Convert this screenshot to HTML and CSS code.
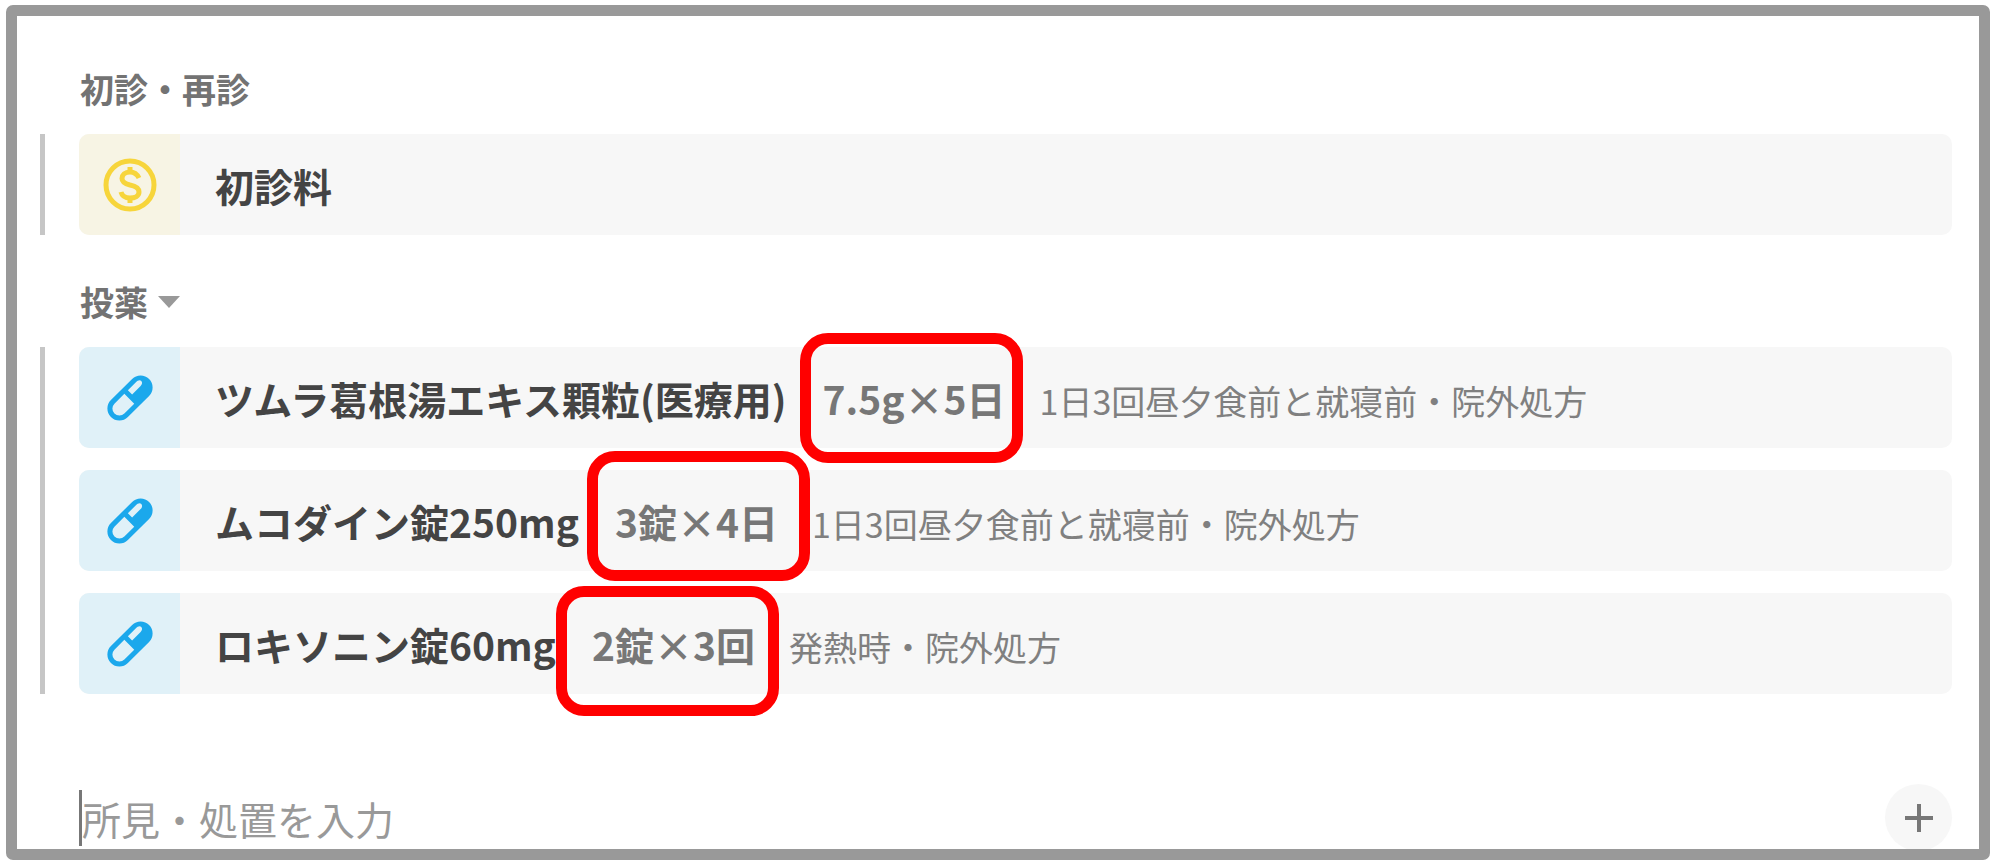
FILE: index.html
```html
<!DOCTYPE html>
<html lang="ja">
<head>
    <meta charset="UTF-8">
    <meta name="viewport" content="width=device-width, initial-scale=1.0">
    <title>カルテ入力</title>
    <link rel="stylesheet" href="styles.css">
</head>
<body>
    <svg width="0" height="0" class="defs" aria-hidden="true">
        <symbol id="pill" viewBox="0 0 48 48">
            <g transform="rotate(45 24 24)">
                <rect x="12" y="-3" width="24" height="54" rx="12" fill="#1ba8ec"/>
                <path d="M17 25h14v14a7 7 0 0 1-14 0z" fill="#e0f1f8"/>
                <path d="M17 20v-11c0-3 1-5 3-5s3 2 3 4v12z" fill="#e0f1f8"/>
            </g>
        </symbol>
    </svg>

    <main class="karte">
        <section class="section">
            <h2 class="section-title">初診・再診</h2>
            <ul class="orders">
                <li class="order">
                    <span class="order-icon fee">
                        <svg viewBox="0 0 54 54" width="54" height="54" fill="none" stroke="#f7d53b" stroke-width="5">
                            <circle cx="27" cy="27" r="24"/>
                            <path d="M36 20c-2-4-5-6-9-6-5 0-8 3-8 6.500 0 4 4 5.500 8 6.500 5 1 9 3 9 7s-4 6-9 6c-5 0-8-2-9-6"/>
                            <path d="M27 9v6M27 39v6"/>
                        </svg>
                    </span>
                    <span class="name">初診料</span>
                </li>
            </ul>
        </section>

        <section class="section">
            <h2 class="section-title">
                <button type="button" class="toggle">投薬<span class="arrow"></span></button>
            </h2>
            <ul class="orders">
                <li class="order">
                    <span class="order-icon drug"><svg width="48" height="48"><use href="#pill"/></svg></span>
                    <p class="order-text">
                        <span class="name">ツムラ葛根湯エキス顆粒(医療用)</span>
                        <span class="amount">7.5g×5日<span class="mark mark-first"></span></span>
                        <span class="usage">1日3回昼夕食前と就寝前・院外処方</span>
                    </p>
                </li>
                <li class="order">
                    <span class="order-icon drug"><svg width="48" height="48"><use href="#pill"/></svg></span>
                    <p class="order-text">
                        <span class="name">ムコダイン錠250mg</span>
                        <span class="amount">3錠×4日<span class="mark mark-second"></span></span>
                        <span class="usage">1日3回昼夕食前と就寝前・院外処方</span>
                    </p>
                </li>
                <li class="order">
                    <span class="order-icon drug"><svg width="48" height="48"><use href="#pill"/></svg></span>
                    <p class="order-text">
                        <span class="name">ロキソニン錠60mg</span>
                        <span class="amount">2錠×3回<span class="mark mark-third"></span></span>
                        <span class="usage">発熱時・院外処方</span>
                    </p>
                </li>
            </ul>
        </section>

        <form class="entry">
            <input type="text" class="entry-input" placeholder="所見・処置を入力" aria-label="所見・処置を入力">
            <button type="button" class="add" aria-label="追加">
                <svg viewBox="0 0 28 28" width="28" height="28" stroke="#777" stroke-width="4">
                    <path d="M0 14h28M14 0v28"/>
                </svg>
            </button>
        </form>
    </main>
</body>
</html>
```
FILE: styles.css
```css
* {
    box-sizing: border-box;
}
body {
    margin: 0;
    padding: 5px 10px 8px 6px;
    background: #fff;
    font-family: "Noto Sans CJK JP", "Noto Sans", sans-serif;
    color: #444;
}
button, input {
    font: inherit;
    color: inherit;
    border: none;
    padding: 0;
    background: none;
}
.defs {
    position: absolute;
}
.karte {
    height: calc(100vh - 13px);
    padding: 53px 27px 0 23px;
    border: 11px solid #999;
    border-radius: 7px;
    overflow: hidden;
}
.section {
    margin-bottom: 47px;
}
.section-title {
    margin: 0 0 25px;
    padding-left: 40px;
    font-size: 34px;
    line-height: 40px;
    font-weight: 700;
    color: #737373;
}
.toggle {
    display: flex;
    align-items: center;
    gap: 10px;
    cursor: pointer;
}
.arrow {
    border: 11px solid transparent;
    border-top: 12px solid #999;
    border-bottom: none;
}
.orders {
    display: flex;
    flex-direction: column;
    gap: 22px;
    margin: 0;
    padding: 0 0 0 34px;
    border-left: 5px solid #c6c6c6;
    list-style: none;
}
.order {
    display: flex;
    align-items: center;
    height: 101px;
    border-radius: 10px;
    background: #f7f7f7;
    white-space: nowrap;
}
.order-icon {
    display: flex;
    align-items: center;
    justify-content: center;
    width: 101px;
    height: 100%;
    margin-right: 35px;
    border-radius: 10px 0 0 10px;
}
.fee {
    background: #f7f4e4;
}
.drug {
    background: #e0f1f8;
}
.order-text {
    display: flex;
    align-items: baseline;
    margin: 0;
}
.name {
    font-size: 39px;
    font-weight: 700;
}
.amount {
    position: relative;
    margin: 0 34px 0 36px;
    font-size: 39px;
    font-weight: 700;
    color: #777;
}
.usage {
    font-size: 34px;
    color: #808080;
}
/* red frames around the dosage */
.mark {
    position: absolute;
    width: 223px;
    height: 130px;
    border: 11px solid #f00;
    border-radius: 28px;
}
.mark-first {
    top: -37px;
    left: -23px;
}
.mark-second {
    top: -42px;
    left: -28px;
}
.mark-third {
    top: -30px;
    left: -36px;
}
.entry {
    display: flex;
    align-items: center;
    justify-content: space-between;
    margin-top: 90px;
    padding-left: 39px;
}
.entry-input {
    flex: 1;
    height: 56px;
    border-left: 3px solid #777;
    outline: none;
    font-size: 39px;
}
.entry-input::placeholder {
    color: #999;
    opacity: 1;
}
.add {
    display: flex;
    align-items: center;
    justify-content: center;
    width: 67px;
    height: 67px;
    border-radius: 50%;
    background: #f7f7f7;
    cursor: pointer;
}
```
